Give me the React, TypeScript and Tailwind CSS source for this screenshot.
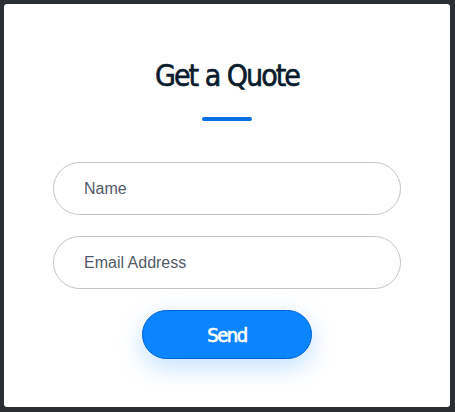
export default function App() {
  return (
    <div className="h-[412px] w-full bg-[#2b2e33] p-1">
      <div className="flex h-[403px] w-[446px] flex-col items-center rounded-[3px] bg-white px-[49px] pt-[52px]">
        <h2
          className="text-[30px] leading-[40px] tracking-[-2px] [word-spacing:1px] text-[#0b1b2e] [-webkit-text-stroke:0.6px_#0b1b2e]"
          style={{ fontFamily: '"DejaVu Sans Condensed", "Roboto Condensed", Roboto, sans-serif' }}
        >
          Get a Quote
        </h2>
        <div className="mt-[21px] h-1 w-[50px] rounded-full bg-[#0a6fe3]" />

        <form className="mt-[41px] flex w-full flex-col items-center gap-[21px]">
          <input
            type="text"
            placeholder="Name"
            className="h-[53px] w-full rounded-full border border-[#c4c4c4] px-[30px] text-[16px] text-[#4a5262] outline-none placeholder:text-[#525a69]"
            style={{ fontFamily: '"Liberation Sans", Arial, sans-serif' }}
          />
          <input
            type="email"
            placeholder="Email Address"
            className="h-[53px] w-full rounded-full border border-[#c4c4c4] px-[30px] text-[16px] text-[#4a5262] outline-none placeholder:text-[#525a69]"
            style={{ fontFamily: '"Liberation Sans", Arial, sans-serif' }}
          />
          <button
            type="button"
            className="h-[49px] w-[170px] rounded-full border border-[#0062d6] bg-[#0a84ff] text-[20px] tracking-[-1.5px] text-white shadow-[0_8px_24px_rgba(10,132,255,0.25)] [-webkit-text-stroke:0.6px_#ffffff]"
            style={{ fontFamily: '"DejaVu Sans Condensed", "Roboto Condensed", Roboto, sans-serif' }}
          >
            Send
          </button>
        </form>
      </div>
    </div>
  );
}
